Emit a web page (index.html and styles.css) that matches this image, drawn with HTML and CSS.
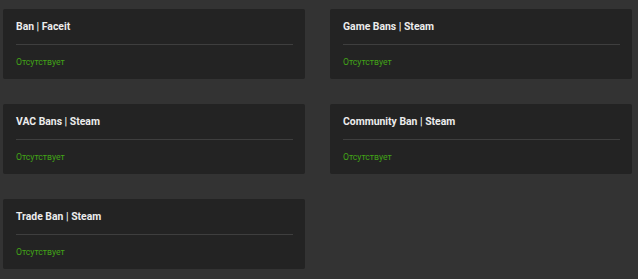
FILE: index.html
```html
<!DOCTYPE html>
<html lang="ru">
<head>
    <meta charset="UTF-8">
    <meta name="viewport" content="width=device-width, initial-scale=1.0">
    <title>Bans</title>
    <link rel="stylesheet" href="styles.css">
</head>
<body>
    <div class="bans">
        <div class="ban-card">
            <div class="ban-title">Ban | Faceit</div>
            <div class="ban-status">Отсутствует</div>
        </div>
        <div class="ban-card">
            <div class="ban-title">Game Bans | Steam</div>
            <div class="ban-status">Отсутствует</div>
        </div>
        <div class="ban-card">
            <div class="ban-title">VAC Bans | Steam</div>
            <div class="ban-status">Отсутствует</div>
        </div>
        <div class="ban-card">
            <div class="ban-title">Community Ban | Steam</div>
            <div class="ban-status">Отсутствует</div>
        </div>
        <div class="ban-card">
            <div class="ban-title">Trade Ban | Steam</div>
            <div class="ban-status">Отсутствует</div>
        </div>
    </div>
</body>
</html>
```

FILE: styles.css
```css
body {
    margin: 0;
    font-family: Roboto, "Liberation Sans", sans-serif;
    background-color: #333333;
    height: 279px;
    overflow: hidden;
}
.bans {
    display: grid;
    grid-template-columns: 1fr 1fr;
    gap: 25px;
    padding: 9px 6px 0 3px;
}
.ban-card {
    background-color: #232323;
    border-radius: 2px;
    padding: 12px 12px 12px 13px;
    height: 70px;
    box-sizing: border-box;
}
.ban-title {
    color: #ececec;
    font-size: 10.4px;
    font-weight: bold;
    line-height: 12px;
    padding-bottom: 11px;
    border-bottom: 1px solid #3e3e3e;
}
.ban-status {
    color: #42a317;
    font-size: 8.7px;
    line-height: 10px;
    margin-top: 12px;
}
```
